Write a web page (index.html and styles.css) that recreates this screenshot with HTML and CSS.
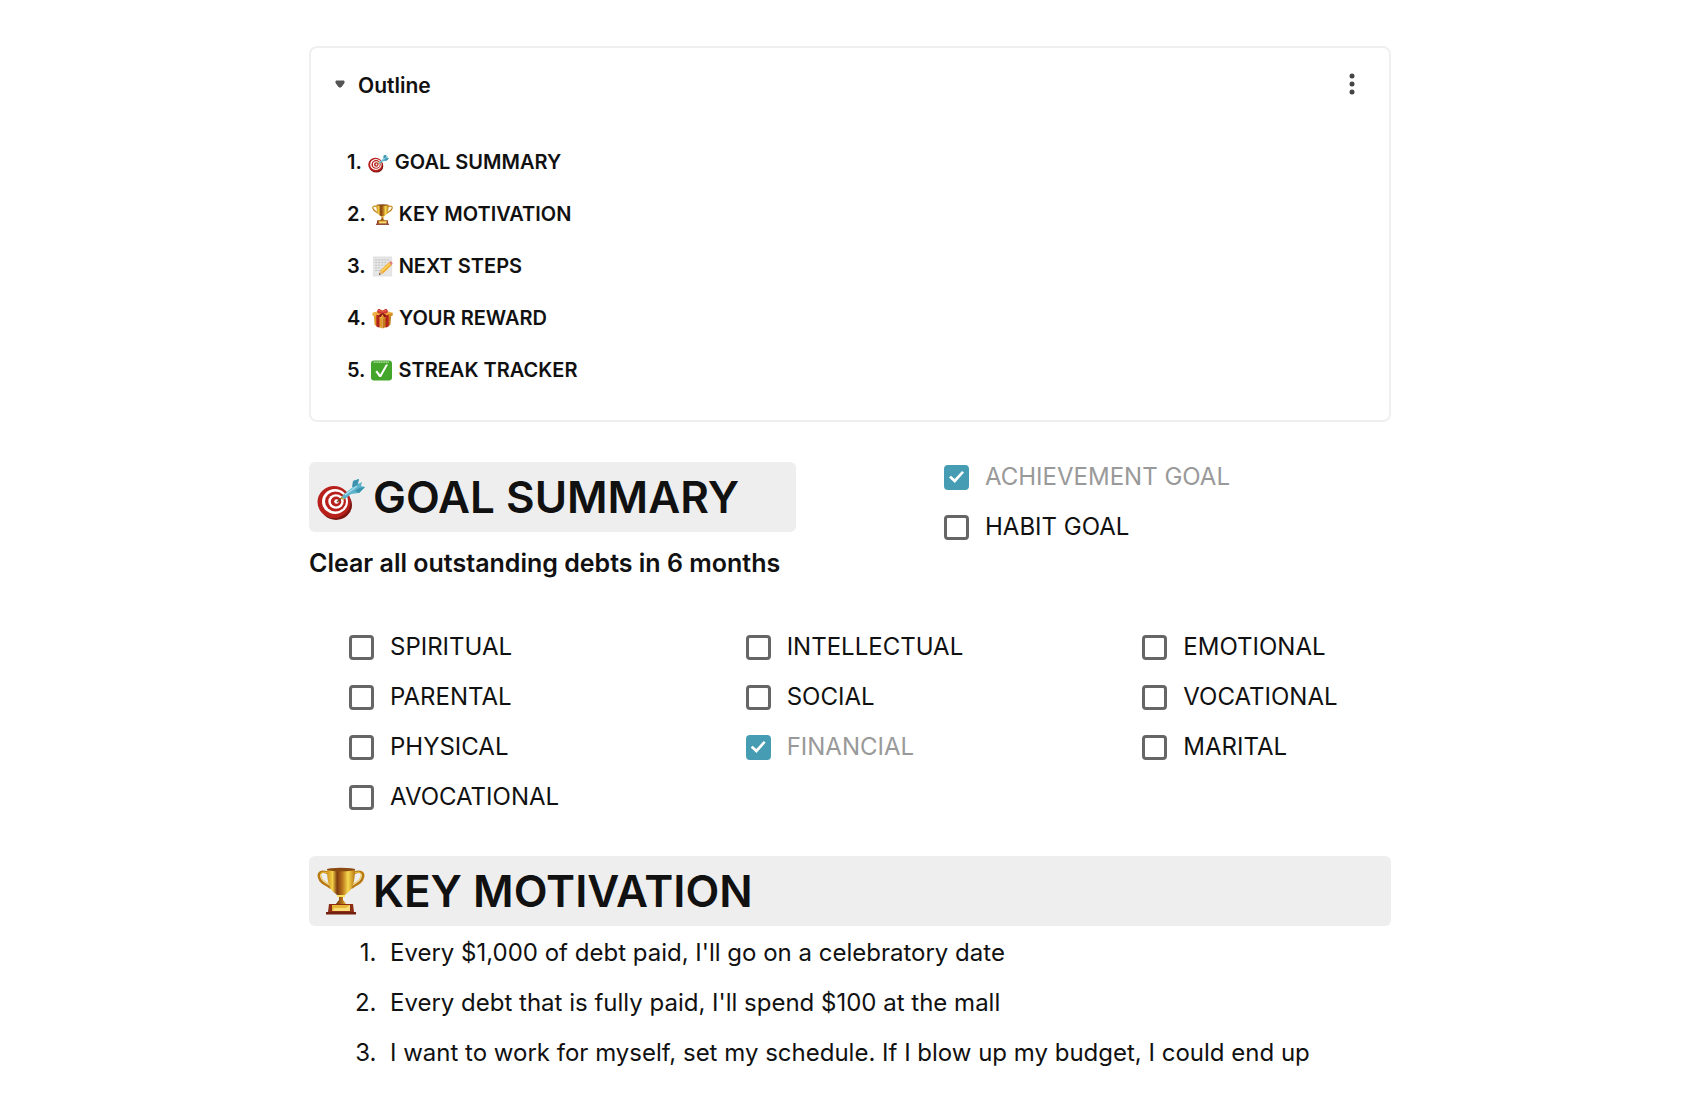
FILE: index.html
```html
<!DOCTYPE html>
<html lang="en">
  <head>
    <meta charset="utf-8" />
    <title>Goal</title>
    <link rel="stylesheet" href="styles.css">
  </head>
  <body>
    <!-- icon shapes, used in the outline and in the headings -->
    <svg class="sprite" aria-hidden="true">
      <linearGradient id="gold">
        <stop offset="0" stop-color="#d0931c"/>
        <stop offset=".2" stop-color="#f3cf45"/>
        <stop offset=".36" stop-color="#7d3a10"/>
        <stop offset=".55" stop-color="#b8741a"/>
        <stop offset=".75" stop-color="#f6d950"/>
        <stop offset="1" stop-color="#b97610"/>
      </linearGradient>
      <symbol id="target" viewBox="0 0 48 48">
        <ellipse cx="19" cy="32" rx="16" ry="15" fill="#7d1613"/>
        <ellipse cx="17" cy="29" rx="16.5" ry="16" fill="#b8201c"/>
        <ellipse cx="18" cy="28.500" rx="13" ry="12.500" fill="#fff"/>
        <ellipse cx="18.500" cy="28.500" rx="10.500" ry="10" fill="#b8201c"/>
        <ellipse cx="19" cy="28.500" rx="7.700" ry="7.300" fill="#fff"/>
        <ellipse cx="19" cy="28.500" rx="5.200" ry="5" fill="#b8201c"/>
        <ellipse cx="19.500" cy="28.500" rx="2.300" ry="2.200" fill="#fff"/>
        <path d="M20 29l7-6" stroke="#6b4a20" stroke-width="1.500"/>
        <path d="M24 25l4-5 3 3-5 4z" fill="#e8b92e"/>
        <path d="M26 22l10-8 0-6 6-2-1 5 4-2-1 4 4 1-6 6-8 1-6 5-3-1z" fill="#5cb3cb"/>
        <path d="M35 14l1-6 6-2-2 7zM38 18l4-3 6-1-6 6z" fill="#3c93ad"/>
        <path d="M28 22l12-9" stroke="#a8dfec" stroke-width="1.500"/>
      </symbol>
      <symbol id="trophy" viewBox="0 0 48 48">
        <path d="M11 6C4 3 1 6 2 10c1 5 5 7 9 9l3 2M37 6c7-3 10 0 9 4-1 5-5 7-9 9l-3 2" fill="none" stroke="#b87912" stroke-width="2.500"/>
        <path d="M11 6C5 4 3 6 4 9c1 4 4 6 8 8M37 6c6-2 8 0 7 3-1 4-4 6-8 8" fill="none" stroke="#f3c53a" stroke-width="1"/>
        <path d="M10 2h28c0 12-2 21-9 25l-3 3v3l4 5H18l4-5v-3l-3-3C12 23 10 14 10 2z" fill="url(#gold)"/>
        <ellipse cx="24" cy="2.500" rx="14" ry="1.700" fill="#8a4a12"/>
        <path d="M20 29h8" stroke="#fbe25c" stroke-width="2"/>
        <path d="M12 37h24l1 8H11z" fill="#8d2d14"/>
        <path d="M9 45h30v2.500H9z" fill="#74200f"/>
        <path d="M15 38h18v6H15z" fill="#e6b636"/>
        <path d="M17 41h12l4-3v6H16z" fill="#f8dd78"/>
      </symbol>
      <symbol id="memo" viewBox="0 0 48 48">
        <path d="M3 2h42v44H3z" fill="#e6e6e6" stroke="#d2d2d2"/>
        <path d="M7 9h33M7 15h28M7 21h26M7 27h15M7 33h12" stroke="#bdbdbd" stroke-width="2" stroke-dasharray="5 2"/>
        <path d="M16 43l3-10 20-19 6 7-20 19z" fill="#f0a92c"/>
        <path d="M20 34l20-18 2 3-20 18z" fill="#fbd566"/>
        <path d="M39 14l3-2q4 0 5 5l-2 4z" fill="#dd7f76"/>
        <path d="M16 43l3-10 6 7z" fill="#e2bd8c"/>
        <path d="M16 43l1-4 3 3z" fill="#333"/>
      </symbol>
      <symbol id="gift" viewBox="0 0 48 48">
        <path d="M4 15l20 7v25L6 39z" fill="#e19a2a"/>
        <path d="M44 15l-20 7v25l18-8z" fill="#c47a1c"/>
        <path d="M1 11l23-7 23 7v6l-23 8-23-8z" fill="#eeb043"/>
        <path d="M24 18l23-7v6l-23 8z" fill="#d68d26"/>
        <path d="M10 15l7 3v27l-7-3zM38 15l-7 3v27l7-3z" fill="#b3211d"/>
        <path d="M24 12C16 13 11 12 12 6c1-6 9-5 12 2 3-7 11-8 12-2 1 6-4 7-12 6z" fill="#cf3430"/>
        <path d="M24 10l-11 8 7 3 4-7 4 7 7-3z" fill="#8f1714"/>
        <path d="M15 6q5-1 8 4M33 6q-5-1-8 4" stroke="#f0716a" stroke-width="2" fill="none"/>
      </symbol>
      <symbol id="check" viewBox="0 0 48 48">
        <rect x="0" y="1" width="48" height="46" rx="7" fill="#43a62b"/>
        <path d="M6 5h36" stroke="#9bd48b" stroke-width="4" stroke-dasharray="3 1"/>
        <path d="M10 27l4-3 7 9L34 10h5L23 39h-4z" fill="#fff"/>
      </symbol>
    </svg>

    <main class="page">
      <nav class="outline">
        <header class="outline-header">
          <button class="toggle" type="button">
            <svg class="caret" viewBox="0 0 10 8" aria-hidden="true"><path d="M1 1h8v2L6 7H4L1 3z" fill="#555" stroke="#555" stroke-linejoin="round"/></svg>
            Outline
          </button>
          <button class="more" type="button" aria-label="More">
            <svg viewBox="0 0 6 22" aria-hidden="true"><circle cx="3" cy="3" r="2.500"/><circle cx="3" cy="11" r="2.500"/><circle cx="3" cy="19" r="2.500"/></svg>
          </button>
        </header>
        <ul class="outline-list">
          <li><a href="#goal-summary">1. <svg class="icon"><use href="#target"/></svg> GOAL SUMMARY</a></li>
          <li><a href="#key-motivation">2. <svg class="icon"><use href="#trophy"/></svg> KEY MOTIVATION</a></li>
          <li><a href="#next-steps">3. <svg class="icon"><use href="#memo"/></svg> NEXT STEPS</a></li>
          <li><a href="#your-reward">4. <svg class="icon"><use href="#gift"/></svg> YOUR REWARD</a></li>
          <li><a href="#streak-tracker">5. <svg class="icon"><use href="#check"/></svg> STREAK TRACKER</a></li>
        </ul>
      </nav>

      <section class="columns two">
        <div>
          <h1 id="goal-summary"><svg class="icon-large"><use href="#target"/></svg>GOAL SUMMARY</h1>
          <p class="goal">Clear all outstanding debts in 6 months</p>
        </div>
        <div class="checks">
          <label><input type="checkbox" checked><span>ACHIEVEMENT GOAL</span></label>
          <label><input type="checkbox"><span>HABIT GOAL</span></label>
        </div>
      </section>

      <section class="columns three">
        <div class="checks">
          <label><input type="checkbox"><span>SPIRITUAL</span></label>
          <label><input type="checkbox"><span>PARENTAL</span></label>
          <label><input type="checkbox"><span>PHYSICAL</span></label>
          <label><input type="checkbox"><span>AVOCATIONAL</span></label>
        </div>
        <div class="checks">
          <label><input type="checkbox"><span>INTELLECTUAL</span></label>
          <label><input type="checkbox"><span>SOCIAL</span></label>
          <label><input type="checkbox" checked><span>FINANCIAL</span></label>
        </div>
        <div class="checks">
          <label><input type="checkbox"><span>EMOTIONAL</span></label>
          <label><input type="checkbox"><span>VOCATIONAL</span></label>
          <label><input type="checkbox"><span>MARITAL</span></label>
        </div>
      </section>

      <section>
        <h1 id="key-motivation"><svg class="icon-large"><use href="#trophy"/></svg>KEY MOTIVATION</h1>
        <ol class="motivation">
          <li>Every $1,000 of debt paid, I'll go on a celebratory date</li>
          <li>Every debt that is fully paid, I'll spend $100 at the mall</li>
          <li>I want to work for myself, set my schedule. If I blow up my budget, I could end up</li>
        </ol>
      </section>
    </main>
  </body>
</html>
```
FILE: styles.css
```css
* {
  box-sizing: border-box;
}
body {
  margin: 0;
  background-color: #fff;
  color: #111;
  font-family: Inter, "Liberation Sans", sans-serif;
  font-size: 24px;
  line-height: 50px;
}
ul, ol, p, h1 {
  margin: 0;
  padding: 0;
}
button {
  padding: 0;
  border: 0;
  background: none;
  color: inherit;
  font: inherit;
  cursor: pointer;
}
.sprite {
  position: absolute;
  width: 0;
  height: 0;
}
.page {
  max-width: 1082px;
  margin: 0 auto;
  padding-top: 46px;
}

/* outline */
.outline {
  padding: 12px 34px 24px 24px;
  border: 2px solid #efefef;
  border-radius: 8px;
  font-size: 20px;
  font-weight: 600;
  line-height: 52px;
}
.outline-header {
  display: flex;
  justify-content: space-between;
  align-items: center;
  margin-bottom: 24px;
}
.toggle {
  display: flex;
  align-items: center;
  gap: 13px;
  font-size: 21px;
}
.caret {
  width: 10px;
  height: 8px;
  margin-bottom: 4px;
}
.more {
  display: flex;
  padding-bottom: 4px;
}
.more svg {
  width: 6px;
  height: 22px;
  fill: #444;
}
.outline-list {
  padding-left: 12px;
  list-style: none;
}
.outline-list a {
  display: flex;
  align-items: center;
  gap: 6px;
  color: inherit;
  text-decoration: none;
}
.icon {
  width: 21px;
  height: 21px;
}

/* sections */
.columns {
  display: grid;
  column-gap: 108px;
}
.two {
  grid-template-columns: repeat(2, 1fr);
  margin-top: 40px;
}
.three {
  grid-template-columns: repeat(3, 1fr);
  margin: 34px 0;
}
h1 {
  display: flex;
  align-items: center;
  gap: 8px;
  height: 70px;
  padding: 0 8px;
  border-radius: 6px;
  background-color: #eee;
  font-size: 44px;
  font-weight: 600;
  white-space: nowrap;
}
.icon-large {
  width: 48px;
  height: 48px;
}
.goal {
  padding-top: 6px;
  font-size: 25px;
  font-weight: 600;
}
.checks {
  padding-left: 40px;
}
.two .checks {
  margin-top: -10px;
}
.checks label {
  display: flex;
  align-items: center;
  gap: 16px;
}
.checks input {
  display: grid;
  place-content: center;
  appearance: none;
  width: 25px;
  height: 25px;
  margin: 0;
  border: 3px solid #666;
  border-radius: 4px;
}
.checks input:checked {
  border-color: #469db3;
  background-color: #469db3;
}
.checks input:checked::before {
  content: "";
  width: 15px;
  height: 12px;
  background-color: #fff;
  clip-path: polygon(0 55%, 13% 40%, 38% 67%, 87% 0, 100% 13%, 39% 100%);
}
.checks input:checked + span {
  color: #999;
}
.motivation {
  padding: 2px 0 0 81px;
}
.motivation li::marker {
  content: counter(list-item) ".\00a0\00a0";
  font-variant-numeric: normal;
}
```
